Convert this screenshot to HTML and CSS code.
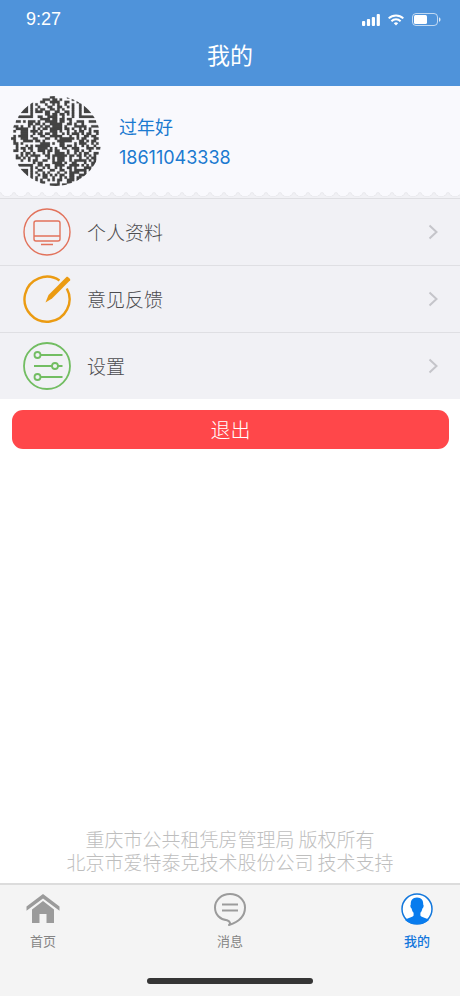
FILE: index.html
```html
<!DOCTYPE html>
<html lang="zh-CN">
<head>
    <meta charset="UTF-8">
    <meta name="viewport" content="width=device-width, initial-scale=1.0">
    <title>我的</title>
    <link rel="stylesheet" href="styles.css">
</head>
<body>
    <header class="app-header">
        <div class="status-bar">
            <span class="time">9:27</span>
            <div class="status-icons">
                <svg width="18" height="12" viewBox="0 0 18 12" fill="#fff">
                    <rect x="0" y="7" width="3.200" height="5" rx="1"/>
                    <rect x="4.900" y="5" width="3.200" height="7" rx="1"/>
                    <rect x="9.800" y="3" width="3.200" height="9" rx="1"/>
                    <rect x="14.700" y="0" width="3.200" height="12" rx="1"/>
                </svg>
                <svg width="16" height="12" viewBox="0 0 16 12" fill="none" stroke="#fff" stroke-width="2">
                    <path d="M0.7 4.4a10.4 10.4 0 0 1 14.6 0"/>
                    <path d="M3.4 7.2a6.6 6.6 0 0 1 9.2 0"/>
                    <path d="M8 11.6l-2.2-2.4a3.2 3.2 0 0 1 4.4 0z" fill="#fff" stroke="none"/>
                </svg>
                <svg width="29" height="13" viewBox="0 0 29 13">
                    <rect x="0.5" y="0.5" width="25" height="12" rx="3.5" fill="none" stroke="#fff" stroke-opacity="0.65"/>
                    <rect x="2" y="2" width="13" height="9" rx="1.5" fill="#fff"/>
                    <path d="M27 4.2c2 .8 2 3.8 0 4.6z" fill="#fff" fill-opacity="0.8"/>
                </svg>
            </div>
        </div>
        <h1 class="title">我的</h1>
    </header>

    <main class="content">
        <section class="profile">
            <svg class="qr-code" id="qrCode" viewBox="0 0 37 37" role="img" aria-label="二维码"></svg>
            <div class="profile-info">
                <div class="name">过年好</div>
                <div class="phone">18611043338</div>
            </div>
        </section>
        <div class="torn-edge"></div>

        <nav class="menu">
            <a class="menu-item" href="#profile">
                <svg class="menu-icon" viewBox="0 0 48 48" fill="none" stroke="#e2725b" stroke-width="1.4">
                    <circle cx="24" cy="24" r="23"/>
                    <rect x="11" y="13" width="26" height="20" rx="2"/>
                    <path d="M11 28h26M18 36.5h12"/>
                </svg>
                <span class="menu-text">个人资料</span>
                <svg class="arrow" viewBox="0 0 10 16"><path d="M1.5 1.5L8.5 8l-7 6.500"/></svg>
            </a>
            <a class="menu-item" href="#feedback">
                <svg class="menu-icon" viewBox="0 0 48 48" fill="none" stroke="#eb9b12" stroke-width="2.4">
                    <path d="M36.500 5.500A22.500 22.500 0 1 0 43.800 13.500"/>
                    <path d="M22.500 27.500l3-7.500L43.700 1.800c.9-.8 4.300 2.500 3.500 3.500L29 23.500z" fill="#eb9b12" stroke="none"/>
                </svg>
                <span class="menu-text">意见反馈</span>
                <svg class="arrow" viewBox="0 0 10 16"><path d="M1.5 1.5L8.5 8l-7 6.500"/></svg>
            </a>
            <a class="menu-item" href="#settings">
                <svg class="menu-icon" viewBox="0 0 48 48" fill="none" stroke="#72bd62" stroke-width="1.8">
                    <circle cx="24" cy="24" r="23"/>
                    <circle cx="14.500" cy="13" r="3"/>
                    <path d="M17.500 13H39.500M11 24h18M35 24h4.500M17.500 35H39.500"/>
                    <circle cx="32" cy="24" r="3"/>
                    <circle cx="14.500" cy="35" r="3"/>
                </svg>
                <span class="menu-text">设置</span>
                <svg class="arrow" viewBox="0 0 10 16"><path d="M1.5 1.5L8.5 8l-7 6.500"/></svg>
            </a>
        </nav>

        <button class="logout-btn" type="button">退出</button>

        <footer class="copyright">
            重庆市公共租凭房管理局 版权所有<br>
            北京市爱特泰克技术股份公司 技术支持
        </footer>
    </main>

    <div class="bottom-bar">
        <nav class="tabs">
            <a class="tab" href="#home">
                <svg class="tab-icon" viewBox="0 0 34 34" fill="#9b9b9b">
                    <path d="M17 2L0.500 14.500v4.300L17 6.500l16.500 12.300v-4.300z"/>
                    <path d="M17 9L6 17.500V31h7.500v-9h7v9H28V17.500z"/>
                </svg>
                <span>首页</span>
            </a>
            <a class="tab" href="#message">
                <svg class="tab-icon" viewBox="0 0 34 34" fill="none" stroke="#9b9b9b" stroke-width="2">
                    <path d="M14 28.300C7 27.500 2 22.500 2 15.500 2 8 8.500 2 17 2s15 6 15 13.500c0 8.500-6.500 14.500-16 17.500 1.500-1.500 1.500-3.300-2-4.700z" stroke-linejoin="round"/>
                    <path d="M9 12.500h16M9 18.500h16"/>
                </svg>
                <span>消息</span>
            </a>
            <a class="tab active" href="#mine">
                <svg class="tab-icon" viewBox="0 0 34 34">
                    <circle cx="17" cy="17" r="15" fill="#fff" stroke="#1277dc" stroke-width="1.500"/>
                    <path d="M17 5.500c-4.500 0-6.500 3-6.200 7-.9.500-.3 3.500.8 4 .4 2 1 3.200 2 4.200v2.800c-1 2-6.600 2.300-8.600 4.500A15 15 0 0 0 17 32a15 15 0 0 0 12-4c-2-2.200-7.600-2.500-8.600-4.500v-2.800c1-1 1.600-2.200 2-4.200 1.100-.5 1.700-3.500.8-4 .3-4-1.700-7-6.200-7z" fill="#087cee"/>
                </svg>
                <span>我的</span>
            </a>
        </nav>
        <div class="home-indicator"></div>
    </div>

    <script src="script.js"></script>
</body>
</html>
```
FILE: styles.css
```css
* {
    box-sizing: border-box;
}

body {
    margin: 0;
    min-height: 100vh;
    display: flex;
    flex-direction: column;
    background-color: #fff;
    font-family: "Noto Sans CJK SC", sans-serif;
    font-weight: 300;
}

a {
    color: inherit;
    text-decoration: none;
}

.app-header {
    background-color: #4f93da;
    color: #fff;
    padding-bottom: 17px;
}

.status-bar {
    display: flex;
    justify-content: space-between;
    align-items: center;
    height: 39px;
    padding: 0 19px 0 26px;
}

.time {
    font-family: "Liberation Sans", Arial, sans-serif;
    font-size: 18px;
}

.status-icons {
    display: flex;
    align-items: center;
    gap: 8px;
}

.status-icons svg {
    display: block;
}

.title {
    margin: 0;
    font-size: 23px;
    line-height: 30px;
    font-weight: 400;
    text-align: center;
}

.content {
    flex: 1;
    display: flex;
    flex-direction: column;
}

.profile {
    display: flex;
    align-items: center;
    gap: 18px;
    height: 106px;
    padding: 4px 11px 0;
    background-color: #f9f9fd;
}

.qr-code {
    width: 90px;
    height: 90px;
    border-radius: 50%;
    fill: #444;
    stroke: #444;
    stroke-width: 0.1;
}

.profile-info {
    padding-top: 2px;
    color: #1b7ad0;
    line-height: 32px;
}

.name {
    font-size: 18px;
    font-weight: 400;
}

.phone {
    font-family: Inter, "Liberation Sans", sans-serif;
    font-size: 18px;
    font-weight: 400;
}

.torn-edge {
    height: 6px;
    background: radial-gradient(ellipse at 50% 0, #f9f9fd 55%, #e9e9ed 60%, #f1f1f5 75%) 0 0 / 14px 5px repeat-x #f1f1f5;
}

.menu-item {
    display: flex;
    align-items: center;
    height: 67px;
    padding: 0 22px 1px 23px;
    border-top: 1px solid #dfdfe3;
    background-color: #f1f1f5;
    color: #4c4c4f;
    font-size: 19px;
}

.menu-icon {
    width: 48px;
    height: 48px;
    margin-right: 16px;
}

.menu-text {
    flex: 1;
}

.arrow {
    width: 10px;
    height: 16px;
    fill: none;
    stroke: #c5c5ca;
    stroke-width: 2;
}

.logout-btn {
    height: 39px;
    margin: 11px 11px 0 12px;
    padding: 0;
    border: none;
    border-radius: 11px;
    background-color: #ff474a;
    color: #fff;
    font-family: inherit;
    font-size: 20px;
    font-weight: inherit;
    line-height: 38px;
    cursor: pointer;
}

.copyright {
    margin-top: auto;
    padding-bottom: 10px;
    color: #bebebe;
    font-size: 19px;
    line-height: 23px;
    text-align: center;
}

.bottom-bar {
    padding-bottom: 12px;
    border-top: 2px solid #dcdcdc;
    background-color: #f4f4f4;
}

.tabs {
    display: flex;
    justify-content: space-between;
    padding: 7px 12px 0;
}

.tab {
    display: flex;
    flex-direction: column;
    align-items: center;
    width: 62px;
    color: #858585;
    font-size: 13px;
    font-weight: 400;
    line-height: 20px;
}

.tab-icon {
    width: 34px;
    height: 34px;
    margin-bottom: 5px;
}

.tab.active {
    color: #1277dc;
    font-weight: 500;
}

.home-indicator {
    width: 166px;
    height: 6px;
    margin: 27px auto 0;
    border-radius: 3px;
    background-color: #353535;
}
```
FILE: script.js
```javascript
const qrCode = document.getElementById('qrCode');

const qrRows = [
    '................##.....#.............',
    '.............###.##.#....#...........',
    '........#...##..####..##...#.#.......',
    '......#.#.#...#..#.#..#..#..#.#......',
    '.....##.#..#...##..##..#.#..#.##.....',
    '....###.#.#.##..##.#.#...#..#.###....',
    '....###.#.###.##..##..##.#..#.###....',
    '........#.....##.##.##.#.#..#........',
    '...######..##..####..#...#..#######..',
    '............####.##.##.##............',
    '..##.#.###.#..#####.##..#..###..###..',
    '.......##.##.#..#####..##.#..#.......',
    '.##.#..#.#..#.##.####.#...#####..###.',
    '..#####..#.#.##.#####.##.#..#.#.#....',
    '.#..###.###.#...###.#..#..#.##..#.##.',
    '....###..#.##.##.##..#.#.###.#.##..#.',
    '.#.####.#...##..#####...#..#..##.##..',
    '##..###..##...##..#.######.#.##...##.',
    '.#...####.##.#.....######...##.#.##..',
    '.##.#.......####.#..##....#.###..#.#.',
    '..#...#.#.######....##.##.#..#.#..#..',
    '..#.##.##..####.#.#..##..###...###.##',
    '.##..#..#..###.##.##...#..##.#..#....',
    '....#.##.#...#.#..####.#..#.#.##..##.',
    '..#.#.#.####..##.######.##.##.#.#.#..',
    '..##.#.#..#....#.#.###..#...#..#.##..',
    '....#..#.##..##..#.###..#.#####.#.#..',
    '.........#.##....####.#..##...#..##..',
    '...######..##.##..####..####.#.#.##..',
    '........#.#..#.#..#.#..##.#...###....',
    '....###.#..##...##..##..#.#####.#....',
    '.....##.#.#..#.#...#..#.####..#......',
    '......#.#..#.##.#.#.##..##..###......',
    '........#.#..##..#..#.#.##.##........',
    '..........#.#..#.#.##..###.#.........',
    '............##.....#...##............',
    '................####.##..............'
];

// Draw every run of dark modules as one bar
let path = '';
qrRows.forEach((row, y) => {
    for (const run of row.matchAll(/#+/g)) {
        const width = run[0].length;
        path += `M${run.index} ${y}h${width}v1h-${width}z`;
    }
});

const modules = document.createElementNS('http://www.w3.org/2000/svg', 'path');
modules.setAttribute('d', path);
qrCode.appendChild(modules);
```
